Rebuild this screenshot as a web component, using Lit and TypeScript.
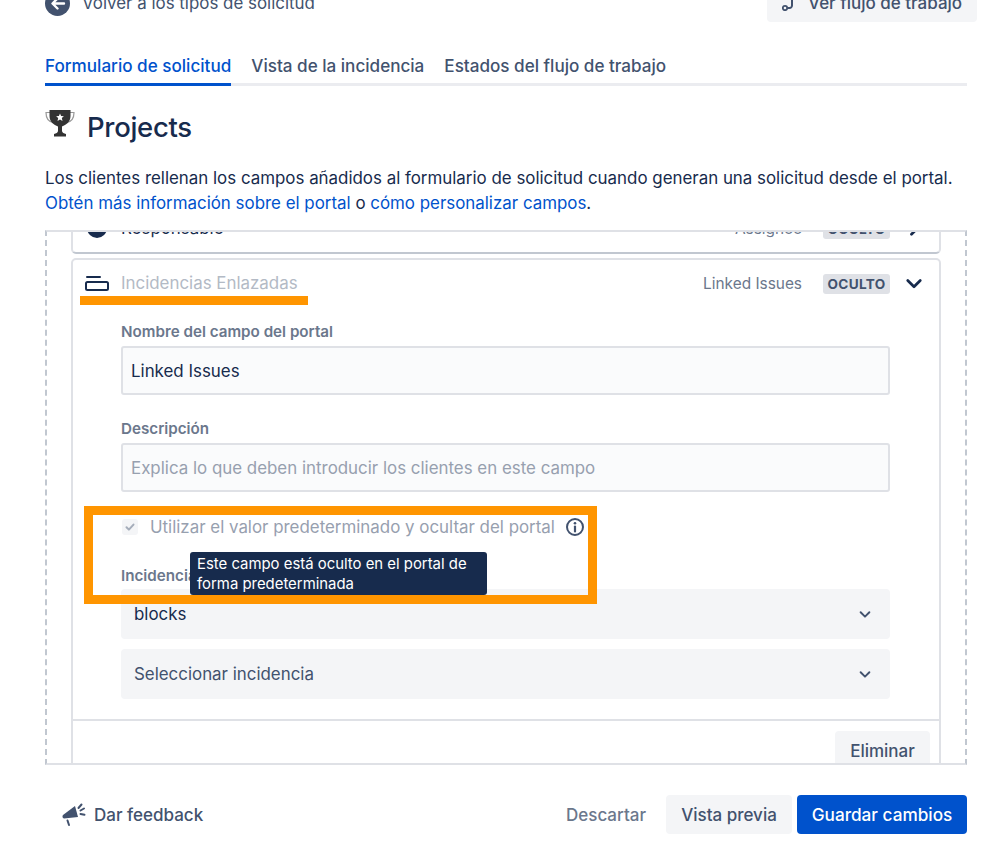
import { LitElement, html, css, svg } from "lit";
import { customElement } from "lit/decorators.js";

const chevronDown = svg`<path d="M3 6l5 5 5-5" fill="none" stroke="currentColor" stroke-width="2.2" stroke-linecap="round" stroke-linejoin="round"/>`;
const chevronRight = svg`<path d="M6 3l5 5-5 5" fill="none" stroke="currentColor" stroke-width="2.2" stroke-linecap="round" stroke-linejoin="round"/>`;

@customElement("app-root")
export class AppRoot extends LitElement {
  static styles = css`
    :host {
      display: block;
      position: relative;
      width: 999px;
      height: 863px;
      overflow: hidden;
      background: #fff;
      font-family: Inter, "Noto Sans", sans-serif;
      color: #172b4d;
      font-size: 16.9px;
    }
    .page { padding: 0 32px 0 45px; width: 922px; }
    .top {
      display: flex; justify-content: space-between; align-items: flex-end;
      height: 38px; margin-top: -16px; margin-right: -10px;
    }
    .back { display: flex; align-items: center; gap: 12px; color: #42526e; font-size: 16.9px; height: 38px; margin-top: -2px; white-space: nowrap; }
    .back svg { width: 25px; height: 25px; }
    .flow {
      display: flex; align-items: center; gap: 13px; height: 38px; width: 210px; box-sizing: border-box;
      padding-left: 15px; background: #f4f5f7; border-radius: 4px; color: #42526e; font-weight: 500; font-size: 17px; white-space: nowrap;
    }
    .flow svg { width: 13px; height: 16px; }
    .tabs {
      display: flex; gap: 20px; height: 41px; margin-top: 23px; box-sizing: border-box;
      border-bottom: 3px solid #ebecf0; font-size: 17.1px; font-weight: 500; color: #42526e;
    }
    .tab { height: 41px; box-sizing: border-box; padding-top: 10px; line-height: 22px; white-space: nowrap; }
    .tab.active { color: #0052cc; border-bottom: 3px solid #0052cc; }
    .title { display: flex; align-items: center; gap: 12px; height: 40px; margin-top: 21px; }
    .title svg { width: 30px; height: 30px; margin-top: -6px; }
    h1 { margin: 0; font-size: 27.5px; font-weight: 500; letter-spacing: -0.3px; color: #172b4d; }
    .desc { margin: 19px 0 0; font-size: 16.9px; line-height: 25px; color: #172b4d; white-space: nowrap; height: 50px; }
    a { color: #0052cc; text-decoration: none; }
    .panel {
      margin-top: 14px; height: 535px; box-sizing: border-box; overflow: hidden;
      border-top: 2px solid #dfe1e6; border-bottom: 2px solid #dfe1e6;
      border-left: 2px dashed #c1c7d0; border-right: 2px dashed #c1c7d0;
      padding: 0 24px;
    }
    .scroll { margin-top: -28px; display: flex; flex-direction: column; gap: 4px; }
    .card { border: 2px solid #dfe1e6; border-radius: 5px; background: #fff; }
    .row { display: flex; align-items: center; height: 46px; padding: 0 15px 0 11px; }
    .row.tall { height: 48px; }
    .card.closed { border-bottom-color: #c1c7d0; border-top: 0; }
    .row-icon { width: 26px; display: flex; justify-content: center; margin-right: 11px; }
    .name { flex: 1; color: #172b4d; }
    .name.off { color: #b3bac5; }
    .id { color: #6b778c; font-size: 15.4px; margin-right: 21px; }
    .badge {
      width: 67px; height: 20px; line-height: 20px; margin-top: 2px; text-align: center; background: #dfe1e6; color: #42526e;
      border-radius: 3px; font-weight: 700; font-size: 13.6px; letter-spacing: 0.3px; margin-right: 14px;
    }
    .chev { width: 20px; height: 20px; color: #172b4d; display: block; }
    .body { padding: 15px 49px 20px 48px; border-bottom: 2px solid #dfe1e6; }
    label { display: block; font-size: 15.2px; font-weight: 600; color: #6b778c; line-height: 22px; height: 20px; white-space: nowrap; }
    .input {
      height: 49px; box-sizing: border-box; margin: 5px 0 23px; padding: 0 8px; display: flex; align-items: center;
      background: #fafbfc; border: 2px solid #dfe1e6; border-radius: 3px;
    }
    .input.ph { color: #97a0af; margin-bottom: 0; }
    .check { display: flex; align-items: center; height: 24px; margin-top: 23px; color: #97a0af; white-space: nowrap; }
    .box {
      width: 16px; height: 16px; margin-left: 1px; margin-right: 12px; border-radius: 3px; background: #f4f5f7;
      display: flex; align-items: center; justify-content: center;
    }
    .box svg { width: 12px; height: 12px; }
    .info { width: 20px; height: 20px; margin-left: 10px; }
    .link-label { margin-top: 26px; }
    .select {
      height: 50px; box-sizing: border-box; margin-top: 10px; padding: 0 18px 0 13px; display: flex; align-items: center;
      justify-content: space-between; background: #f4f5f7; border-radius: 4px;
    }
    .link-label + .select { margin-top: 4px; }
    .select svg { width: 14px; height: 14px; color: #42526e; }
    .select.muted { color: #42526e; }
    .card-foot { display: flex; justify-content: flex-end; padding: 10px 9px 10px 0; }
    .btn {
      height: 39px; box-sizing: border-box; display: flex; align-items: center; justify-content: center;
      border-radius: 4px; font-size: 17px; font-weight: 500; background: #f4f5f7; color: #42526e; white-space: nowrap;
    }
    .del { width: 95px; }
    .foot { display: flex; align-items: center; height: 39px; margin-top: 30px; width: 922px; }
    .fb { display: flex; align-items: center; gap: 8px; margin-left: 17px; color: #42526e; font-weight: 500; font-size: 17px; flex: 1; }
    .fb svg { width: 24px; height: 24px; }
    .discard { color: #6b778c; font-weight: 500; font-size: 17px; margin-right: 20px; }
    .preview { width: 126px; margin-right: 5px; }
    .save { width: 170px; background: #0052cc; color: #fff; font-size: 17.2px; }
    .u-line { position: absolute; left: 80px; top: 296px; width: 228px; height: 9px; background: #ff9500; }
    .u-rect {
      position: absolute; left: 84px; top: 506px; width: 513px; height: 98px; box-sizing: border-box;
      border: 9px solid #ff9500; pointer-events: none;
    }
    .tip {
      position: absolute; left: 190px; top: 552px; width: 297px; height: 43px; box-sizing: border-box;
      padding: 3px 7px; background: #172b4d; color: #fff; border-radius: 3px; font-size: 14.9px; line-height: 19.5px;
    }
  `;

  render() {
    return html`
      <div class="page">
        <div class="top">
          <div class="back">
            <svg viewBox="0 0 25 25"><circle cx="12.5" cy="12.5" r="12.5" fill="#42526e"/><path d="M19 12.5H8M12.5 7.5l-5 5 5 5" fill="none" stroke="#fff" stroke-width="2.4" stroke-linecap="round" stroke-linejoin="round"/></svg>
            <span>Volver a los tipos de solicitud</span>
          </div>
          <div class="flow">
            <svg viewBox="0 0 13 16"><path d="M10 1v9.5a2.5 2.5 0 0 1-2.5 2.5H5" fill="none" stroke="#42526e" stroke-width="2"/><circle cx="3" cy="13" r="2.2" fill="none" stroke="#42526e" stroke-width="1.8"/></svg>
            <span>Ver flujo de trabajo</span>
          </div>
        </div>
        <div class="tabs">
          <div class="tab active">Formulario de solicitud</div>
          <div class="tab">Vista de la incidencia</div>
          <div class="tab">Estados del flujo de trabajo</div>
        </div>
        <div class="title">
          <svg viewBox="0 0 30 30">
            <path d="M6 3.5H1C1 9 3.5 12.5 8 13.5M24 3.5h5C29 9 26.5 12.5 22 13.5" fill="none" stroke="#999" stroke-width="1.2"/>
            <path d="M4.5 1h21v6c0 6-4.500 9-8.500 10.500V22c0 1.500 2 2.500 4 3v2.500H9V25c2-.5 4-1.500 4-3v-4.500C9 16 4.500 13 4.500 7z" fill="#333"/>
            <path d="M15 4.500l1.100 2.600 2.800.2-2.100 1.800.7 2.800L15 10.400l-2.500 1.500.7-2.800-2.100-1.800 2.800-.2z" fill="#fff"/>
          </svg>
          <h1>Projects</h1>
        </div>
        <p class="desc">Los clientes rellenan los campos añadidos al formulario de solicitud cuando generan una solicitud desde el portal.<br><a>Obtén más información sobre el portal</a> o <a>cómo personalizar campos</a>.</p>
        <div class="panel">
          <div class="scroll">
            <div class="card closed">
              <div class="row tall">
                <div class="row-icon"><svg width="20" height="20" viewBox="0 0 20 20"><circle cx="10" cy="10" r="10" fill="#172b4d"/></svg></div>
                <div class="name">Responsable</div>
                <div class="id">Assignee</div>
                <div class="badge">OCULTO</div>
                <svg class="chev" viewBox="0 0 16 16">${chevronRight}</svg>
              </div>
            </div>
            <div class="card">
              <div class="row">
                <div class="row-icon"><svg width="26" height="16" viewBox="0 0 26 16"><path d="M3 2h13" stroke="#172b4d" stroke-width="2" stroke-linecap="round"/><rect x="2" y="7" width="22" height="8" rx="1.5" fill="none" stroke="#172b4d" stroke-width="2"/></svg></div>
                <div class="name off">Incidencias Enlazadas</div>
                <div class="id">Linked Issues</div>
                <div class="badge">OCULTO</div>
                <svg class="chev" viewBox="0 0 16 16">${chevronDown}</svg>
              </div>
              <div class="body">
                <label>Nombre del campo del portal</label>
                <div class="input">Linked Issues</div>
                <label>Descripción</label>
                <div class="input ph">Explica lo que deben introducir los clientes en este campo</div>
                <div class="check">
                  <span class="box"><svg viewBox="0 0 12 12"><path d="M2.500 6.200l2.400 2.400 4.600-5" fill="none" stroke="#a5adba" stroke-width="2" stroke-linecap="round" stroke-linejoin="round"/></svg></span>
                  <span>Utilizar el valor predeterminado y ocultar del portal</span>
                  <svg class="info" viewBox="0 0 20 20"><circle cx="10" cy="10" r="8" fill="none" stroke="#42526e" stroke-width="2"/><circle cx="10" cy="6.300" r="1.300" fill="#42526e"/><path d="M10 9.500v5" stroke="#42526e" stroke-width="2.200" stroke-linecap="round"/></svg>
                </div>
                <label class="link-label">Incidencias enlazadas</label>
                <div class="select"><span>blocks</span><svg viewBox="0 0 16 16">${chevronDown}</svg></div>
                <div class="select muted"><span>Seleccionar incidencia</span><svg viewBox="0 0 16 16">${chevronDown}</svg></div>
              </div>
              <div class="card-foot"><div class="btn del">Eliminar</div></div>
            </div>
          </div>
        </div>
        <div class="foot">
          <div class="fb">
            <svg viewBox="0 0 24 24"><path d="M1 12L13 3l3 11-14 1.500c-1.500 0-2-2.500-1-3.500z" fill="#42526e"/><path d="M5.500 17.500l1.500 4.500M16.500 5l3-3.500M18.500 7.500l3.500-2M18.500 11l4 .8" fill="none" stroke="#42526e" stroke-width="2" stroke-linecap="round"/></svg>
            <span>Dar feedback</span>
          </div>
          <span class="discard">Descartar</span>
          <div class="btn preview">Vista previa</div>
          <div class="btn save">Guardar cambios</div>
        </div>
      </div>
      <div class="u-line"></div>
      <div class="u-rect"></div>
      <div class="tip">Este campo está oculto en el portal de forma predeterminada</div>
    `;
  }
}
